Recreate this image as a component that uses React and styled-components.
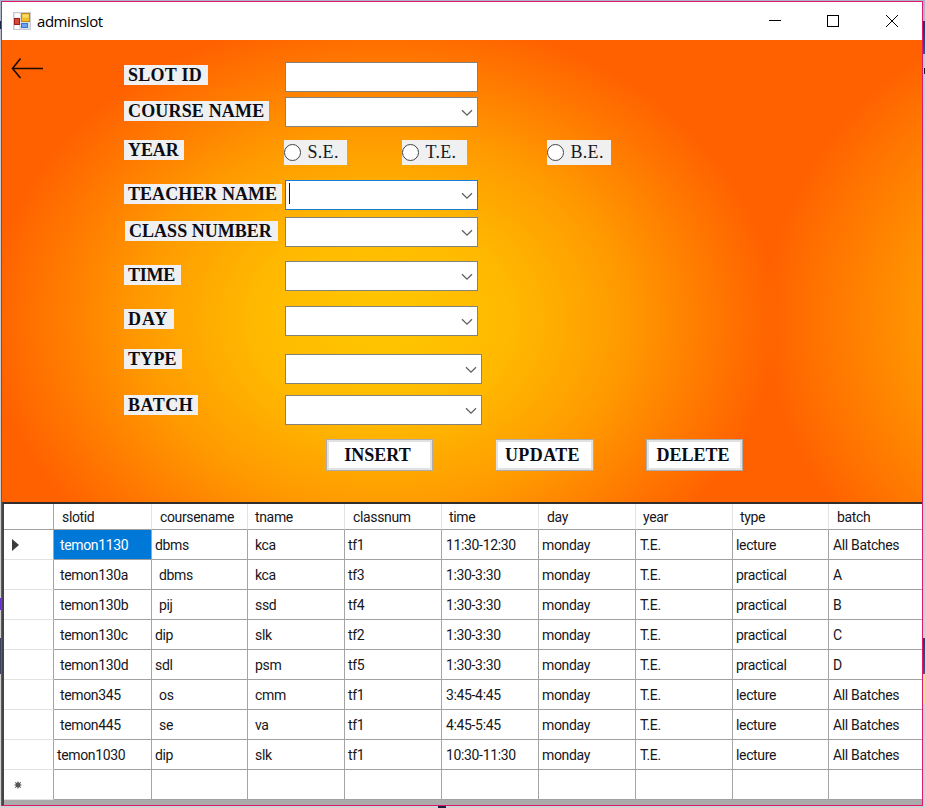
import React from "react";
import styled, { createGlobalStyle } from "styled-components";

const GlobalStyle = createGlobalStyle`
  * { box-sizing: border-box; }
  html, body { margin: 0; padding: 0; overflow: hidden; }
  body { font-family: Roboto, "Liberation Sans", sans-serif; color: #111; }
`;

const Desktop = styled.div`
  width: 925px;
  height: 808px;
  padding: 1px 2px 2px 1px;
  background:
    linear-gradient(#1c2340, #1c2340) 438px 806px / 8px 2px no-repeat,
    linear-gradient(90deg, #f0e0a0, #f0e0a0) 923px 674px / 2px 30px no-repeat,
    linear-gradient(#2f3b66, #44527c) 923px 638px / 2px 36px no-repeat,
    linear-gradient(#26305a, #3d5286) 923px 21px / 2px 33px no-repeat,
    linear-gradient(#1b1b1b, #1b1b1b) 924px 68px / 1px 6px no-repeat,
    linear-gradient(#6a2bd8, #6a2bd8) 0 598px / 1px 12px no-repeat,
    linear-gradient(#3a4266, #3a4266) 0 638px / 1px 36px no-repeat,
    linear-gradient(#20264a, #20264a) 0 21px / 1px 8px no-repeat,
    linear-gradient(#a9b2c6, #c9cbd2 60px, #d2d2d4);
`;

const Window = styled.main`
  display: flex;
  flex-direction: column;
  width: 922px;
  height: 805px;
  border: 1px solid #e0186c;
  background: #fff;
`;

const TitleBar = styled.header`
  display: flex;
  align-items: center;
  height: 38px;
  flex: none;
  padding: 0 23px 0 11px;
  background: #fff;
`;

const Title = styled.h1`
  flex: 1;
  margin: 0 0 0 6px;
  font: 400 15px/20px "Open Sans", "Noto Sans", sans-serif;
  letter-spacing: -0.45px;
  color: #000;
`;

const Controls = styled.div`
  display: flex;
  gap: 45px;
  svg { display: block; }
`;

const Form = styled.section`
  display: flex;
  flex-direction: column;
  flex: none;
  height: 462px;
  padding-top: 22px;
  background:
    radial-gradient(ellipse 385px 330px at 1149px 280px, #ffc600 0%, #ffb400 32%, #ff9500 60%, #ff7300 87%, rgba(255, 96, 0, 0) 101%) 0 0 / 100% 100%,
    radial-gradient(ellipse 385px 300px at 380px 280px, #ffc700 0%, #ffb900 33%, #ff9b00 62%, #ff7800 86%, #ff6000 103%);
`;

const FormBody = styled.div`
  display: flex;
`;

const Back = styled.div`
  width: 122px;
  flex: none;
  padding: 0 0 0 9px;
  margin-top: -5px;
  svg { display: block; }
`;

const Rows = styled.div`
  display: flex;
  flex-direction: column;
`;

const Row = styled.div`
  display: grid;
  grid-template-columns: 160.5px 400px;
  align-items: start;
  height: ${(p) => p.$height}px;
`;

const Label = styled.label`
  justify-self: start;
  width: ${(p) => p.$width}px;
  height: 20px;
  margin: ${(p) => p.$top}px 0 0 ${(p) => p.$indent || 0}px;
  padding-left: 4px;
  background: #f0f0f0;
  font: 700 18px/21px "Liberation Serif", serif;
  letter-spacing: ${(p) => p.$track}px;
  white-space: nowrap;
  color: #0c0c14;
`;

const Field = styled.div`
  display: flex;
  align-items: center;
  justify-content: space-between;
  width: ${(p) => p.$width || 193.5}px;
  height: 30px;
  margin-top: ${(p) => p.$top || 0}px;
  padding: 0 4px 0 3px;
  border: 1px solid ${(p) => (p.$focused ? "#1a7fd4" : "#85827c")};
  background: #fff;
  svg { display: block; margin: 2px 0 0 auto; }
`;

const Caret = styled.span`
  width: 1px;
  height: 21px;
  margin-top: -4px;
  background: #111;
`;

const RadioGroup = styled.div`
  display: grid;
  grid-template-columns: 118px 145px 66px;
  padding-top: 1px;
  margin-left: -1px;
`;

const Radio = styled.span`
  display: flex;
  align-items: center;
  width: ${(p) => p.$width}px;
  height: 25px;
  background: #f0f0f0;
  font: 400 18px/25px "Liberation Serif", serif;
  letter-spacing: 0.3px;
  color: #1a1a22;
`;

const Dot = styled.i`
  width: 17px;
  height: 17px;
  margin: -1px 7px 0 0;
  border: 1.4px solid #444;
  border-radius: 50%;
  background: #fff;
`;

const Actions = styled.div`
  display: flex;
  padding-left: 324px;
`;

const Button = styled.button`
  width: ${(p) => p.$width}px;
  height: 32px;
  margin: 0 ${(p) => p.$gap}px 0 0;
  padding: 0 ${(p) => p.$shift}px 0 0;
  border: 1px solid #adadad;
  box-shadow: inset 0 0 0 2px #e1e1e1;
  background: #fff;
  font: 700 18px/28px "Liberation Serif", serif;
  letter-spacing: ${(p) => p.$track}px;
  white-space: nowrap;
  color: #0c0c14;
`;

const Grid = styled.section`
  flex: 1;
  border-top: 2px solid #302d2c;
  border-left: 2px solid #454545;
  background: #ababab;
  overflow: hidden;
`;

const GridRow = styled.div`
  display: grid;
  grid-template-columns: 50px 98px 96px 97px 97px 97px 97px 97px 96px 93px;
  grid-template-rows: ${(p) => (p.$header ? 26 : 30)}px;
  background: #fff;
`;

const Cell = styled.div`
  padding-left: ${(p) => p.$pad}px;
  border-right: 1px solid ${(p) => (p.$header ? "#e3e3e3" : "#a5a5a5")};
  border-bottom: 1px solid ${(p) => (p.$marker ? "#e2e2e2" : "#a0a0a0")};
  background: ${(p) => (p.$selected ? "#0078d7" : "#fff")};
  color: ${(p) => (p.$selected ? "#fff" : "#16161c")};
  font: 400 14px/${(p) => (p.$header ? 27 : 31)}px Roboto, "Liberation Sans", sans-serif;
  letter-spacing: -0.35px;
  white-space: nowrap;
  overflow: hidden;
  &:last-child { border-right: 0; }
`;

const MarkerCell = styled(Cell)`
  display: flex;
  align-items: center;
  border-right-color: #a5a5a5;
`;

const Chevron = () => (
  <svg width="12" height="8" viewBox="0 0 12 8">
    <path d="M1 1.2 L6 6.2 L11 1.2" fill="none" stroke="#606060" strokeWidth="1.3" />
  </svg>
);

const AppIcon = () => (
  <svg width="18" height="18" viewBox="0 0 18 18">
    <rect x="0.5" y="0.5" width="17" height="17" fill="#dcdfe4" stroke="#c8ccd2" />
    <rect x="2" y="1.5" width="5" height="4" fill="#fff" />
    <rect x="2" y="13" width="4" height="4" fill="#fff" />
    <rect x="8.5" y="1.5" width="8" height="8" fill="#f2bf2c" stroke="#c48a10" />
    <rect x="9.5" y="2.5" width="6" height="3" fill="#fbdc70" />
    <rect x="1.5" y="6.5" width="5" height="6" fill="#d34a3a" stroke="#a51d1d" />
    <rect x="8.5" y="11.5" width="6" height="4" fill="#6ba2f0" stroke="#3b74d0" />
  </svg>
);

const fields = [
  { label: "SLOT ID", width: 84, height: 35, top: 3, track: 0.25, text: true },
  { label: "COURSE NAME", width: 145, height: 42, top: 4, track: 0.17 },
  { label: "YEAR", width: 60, height: 41, top: 1, track: -0.1, radios: true },
  { label: "TEACHER NAME", width: 158, height: 37, top: 4, track: 0.05, focused: true },
  { label: "CLASS NUMBER", width: 153, height: 44, top: 4, indent: 1, track: 0.03 },
  { label: "TIME", width: 57, height: 45, top: 4, track: -0.25 },
  { label: "DAY", width: 50, height: 42, top: 3, track: 1 },
  { label: "TYPE", width: 58, height: 47, top: 1, track: 0.2, fieldTop: 6, fieldWidth: 197.5 },
  { label: "BATCH", width: 74, height: 44, top: 0, track: 0.5, fieldWidth: 197.5 },
];

const radios = [["S.E.", 63], ["T.E.", 65], ["B.E.", 64]];
const headers = ["slotid", "coursename", "tname", "classnum", "time", "day", "year", "type", "batch"];
const headerPads = [8, 8, 7, 8, 7, 8, 7, 7, 8];
const cellPads = [6, 3, 7, 3, 4, 3, 4, 3, 4];
const records = [
  ["temon1130", "dbms", "kca", "tf1", "11:30-12:30", "monday", "T.E.", "lecture", "All Batches"],
  ["temon130a", " dbms", "kca", "tf3", "1:30-3:30", "monday", "T.E.", "practical", "A"],
  ["temon130b", " pij", "ssd", "tf4", "1:30-3:30", "monday", "T.E.", "practical", "B"],
  ["temon130c", "dip", "slk", "tf2", "1:30-3:30", "monday", "T.E.", "practical", "C"],
  ["temon130d", "sdl", "psm", "tf5", "1:30-3:30", "monday", "T.E.", "practical", "D"],
  ["temon345", " os", "cmm", "tf1", "3:45-4:45", "monday", "T.E.", "lecture", "All Batches"],
  ["temon445", " se", "va", "tf1", "4:45-5:45", "monday", "T.E.", "lecture", "All Batches"],
  ["temon1030", "dip", "slk", "tf1", "10:30-11:30", "monday", "T.E.", "lecture", "All Batches"],
  ["", "", "", "", "", "", "", "", ""],
];

const padFor = (value, row, col) =>
  cellPads[col] + (value.startsWith(" ") ? 4 : 0) - (row === 7 && col === 0 ? 3 : 0);

export default function App() {
  return (
    <Desktop>
      <GlobalStyle />
      <Window>
        <TitleBar>
          <AppIcon />
          <Title>adminslot</Title>
          <Controls>
            <svg width="14" height="14"><path d="M2 6.5h12" stroke="#000" /></svg>
            <svg width="14" height="14"><rect x="1.5" y="1.5" width="11" height="11" fill="none" stroke="#000" /></svg>
            <svg width="14" height="14"><path d="M1 1L13 13M13 1L1 13" stroke="#000" /></svg>
          </Controls>
        </TitleBar>
        <Form>
          <FormBody>
            <Back>
              <svg width="34" height="24" viewBox="0 0 34 24">
                <path d="M32 11.5H2M9.5 1.5L1.5 11.5L9.5 21" fill="none" stroke="#1a0e04" strokeWidth="1.6" />
              </svg>
            </Back>
            <Rows>
              {fields.map((f) => (
                <Row key={f.label} $height={f.height}>
                  <Label $width={f.width} $top={f.top} $indent={f.indent} $track={f.track}>{f.label}</Label>
                  {f.radios ? (
                    <RadioGroup>
                      {radios.map(([name, width]) => (
                        <Radio key={name} $width={width}><Dot />{name}</Radio>
                      ))}
                    </RadioGroup>
                  ) : (
                    <Field $width={f.fieldWidth} $top={f.fieldTop} $focused={f.focused}>
                      {f.focused && <Caret />}
                      {!f.text && <Chevron />}
                    </Field>
                  )}
                </Row>
              ))}
            </Rows>
          </FormBody>
          <Actions>
            <Button $width={107} $gap={62} $shift={4} $track={0}>INSERT</Button>
            <Button $width={99} $gap={52} $shift={4} $track={0.4}>UPDATE</Button>
            <Button $width={97} $gap={0} $shift={3} $track={0}>DELETE</Button>
          </Actions>
        </Form>
        <Grid>
          <GridRow $header>
            <MarkerCell $header $pad={0} />
            {headers.map((h, i) => <Cell key={h} $header $pad={headerPads[i]}>{h}</Cell>)}
          </GridRow>
          {records.map((r, ri) => (
            <GridRow key={ri}>
              <MarkerCell $marker $pad={ri === 8 ? 10 : 8}>
                {ri === 0 && <svg width="8" height="12"><path d="M0 0L7 6L0 12Z" fill="#3c3c3c" /></svg>}
                {ri === 8 && (
                  <svg width="8" height="8">
                    <circle cx="4" cy="4" r="2.4" fill="#555" />
                    <path d="M4 0.5V7.5M0.5 4H7.5M1.3 1.3L6.7 6.7M6.7 1.3L1.3 6.7" stroke="#555" strokeWidth="1.1" />
                  </svg>
                )}
              </MarkerCell>
              {r.map((v, ci) => (
                <Cell key={ci} $pad={padFor(v, ri, ci)} $selected={ri === 0 && ci === 0}>{v.trim()}</Cell>
              ))}
            </GridRow>
          ))}
        </Grid>
      </Window>
    </Desktop>
  );
}
